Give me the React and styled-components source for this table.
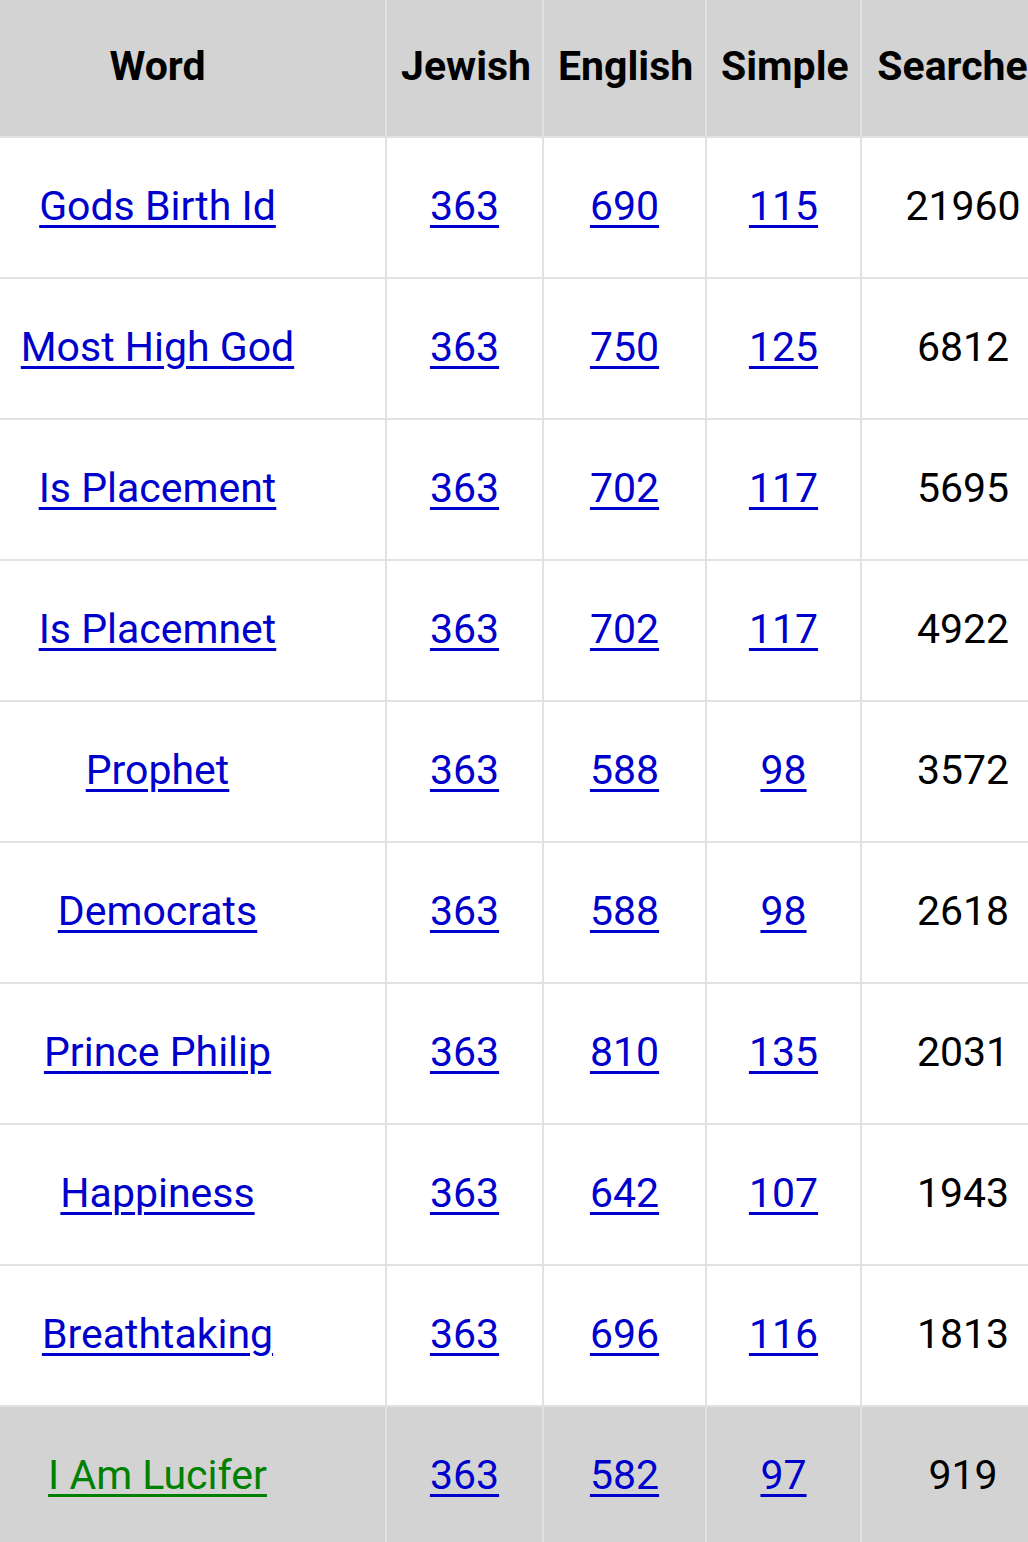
import React from "react";
import styled, { createGlobalStyle } from "styled-components";

const Global = createGlobalStyle`
  html, body { margin: 0; padding: 0; background: #fff; overflow: hidden; }
  body { font-family: Roboto, "Noto Sans", "Liberation Sans", sans-serif; }
`;

const Table = styled.table`
  border-collapse: separate;
  border-spacing: 0;
  table-layout: fixed;
  width: 1066px;
  font-family: Roboto, "Noto Sans", "Liberation Sans", sans-serif;
`;

const HeadCell = styled.th`
  box-sizing: border-box;
  height: 138px;
  padding: 0 ${(p) => (p.$word ? "84px" : "14px")} 5px 14px;
  background: #d3d3d3;
  border-right: 2px solid #e2e2e2;
  border-bottom: 2px solid #e2e2e2;
  font-size: 41px;
  font-weight: 700;
  color: #000;
  text-align: center;
  vertical-align: middle;
  white-space: nowrap;
  overflow: hidden;
`;

const Row = styled.tr`
  background: ${(p) => (p.$highlight ? "#d3d3d3" : "#fff")};
`;

const Cell = styled.td`
  box-sizing: border-box;
  height: 141px;
  padding: 0 ${(p) => (p.$word ? "84px" : "14px")} 4px 14px;
  border-right: 2px solid #e2e2e2;
  border-bottom: 2px solid #e2e2e2;
  font-size: 41px;
  color: #000;
  text-align: center;
  vertical-align: middle;
  white-space: nowrap;
`;

const Link = styled.a`
  color: ${(p) => (p.$green ? "#008000" : "#0000cc")};
  text-decoration: underline;
  text-decoration-thickness: 3px;
  text-underline-offset: 5px;
`;

const rows = [
  ["Gods Birth Id", 363, 690, 115, 21960],
  ["Most High God", 363, 750, 125, 6812],
  ["Is Placement", 363, 702, 117, 5695],
  ["Is Placemnet", 363, 702, 117, 4922],
  ["Prophet", 363, 588, 98, 3572],
  ["Democrats", 363, 588, 98, 2618],
  ["Prince Philip", 363, 810, 135, 2031],
  ["Happiness", 363, 642, 107, 1943],
  ["Breathtaking", 363, 696, 116, 1813],
  ["I Am Lucifer", 363, 582, 97, 919, true],
];

export default function App() {
  return (
    <>
      <Global />
      <Table>
        <colgroup>
          <col style={{ width: 387 }} />
          <col style={{ width: 157 }} />
          <col style={{ width: 163 }} />
          <col style={{ width: 155 }} />
          <col style={{ width: 204 }} />
        </colgroup>
        <thead>
          <tr>
            <HeadCell $word>Word</HeadCell>
            <HeadCell>Jewish</HeadCell>
            <HeadCell>English</HeadCell>
            <HeadCell>Simple</HeadCell>
            <HeadCell>Searches</HeadCell>
          </tr>
        </thead>
        <tbody>
          {rows.map(([w, j, e, s, c, hl]) => (
            <Row key={w} $highlight={hl}>
              <Cell $word>
                <Link href="#" $green={hl}>{w}</Link>
              </Cell>
              <Cell>
                <Link href="#">{j}</Link>
              </Cell>
              <Cell>
                <Link href="#">{e}</Link>
              </Cell>
              <Cell>
                <Link href="#">{s}</Link>
              </Cell>
              <Cell>{c}</Cell>
            </Row>
          ))}
        </tbody>
      </Table>
    </>
  );
}
